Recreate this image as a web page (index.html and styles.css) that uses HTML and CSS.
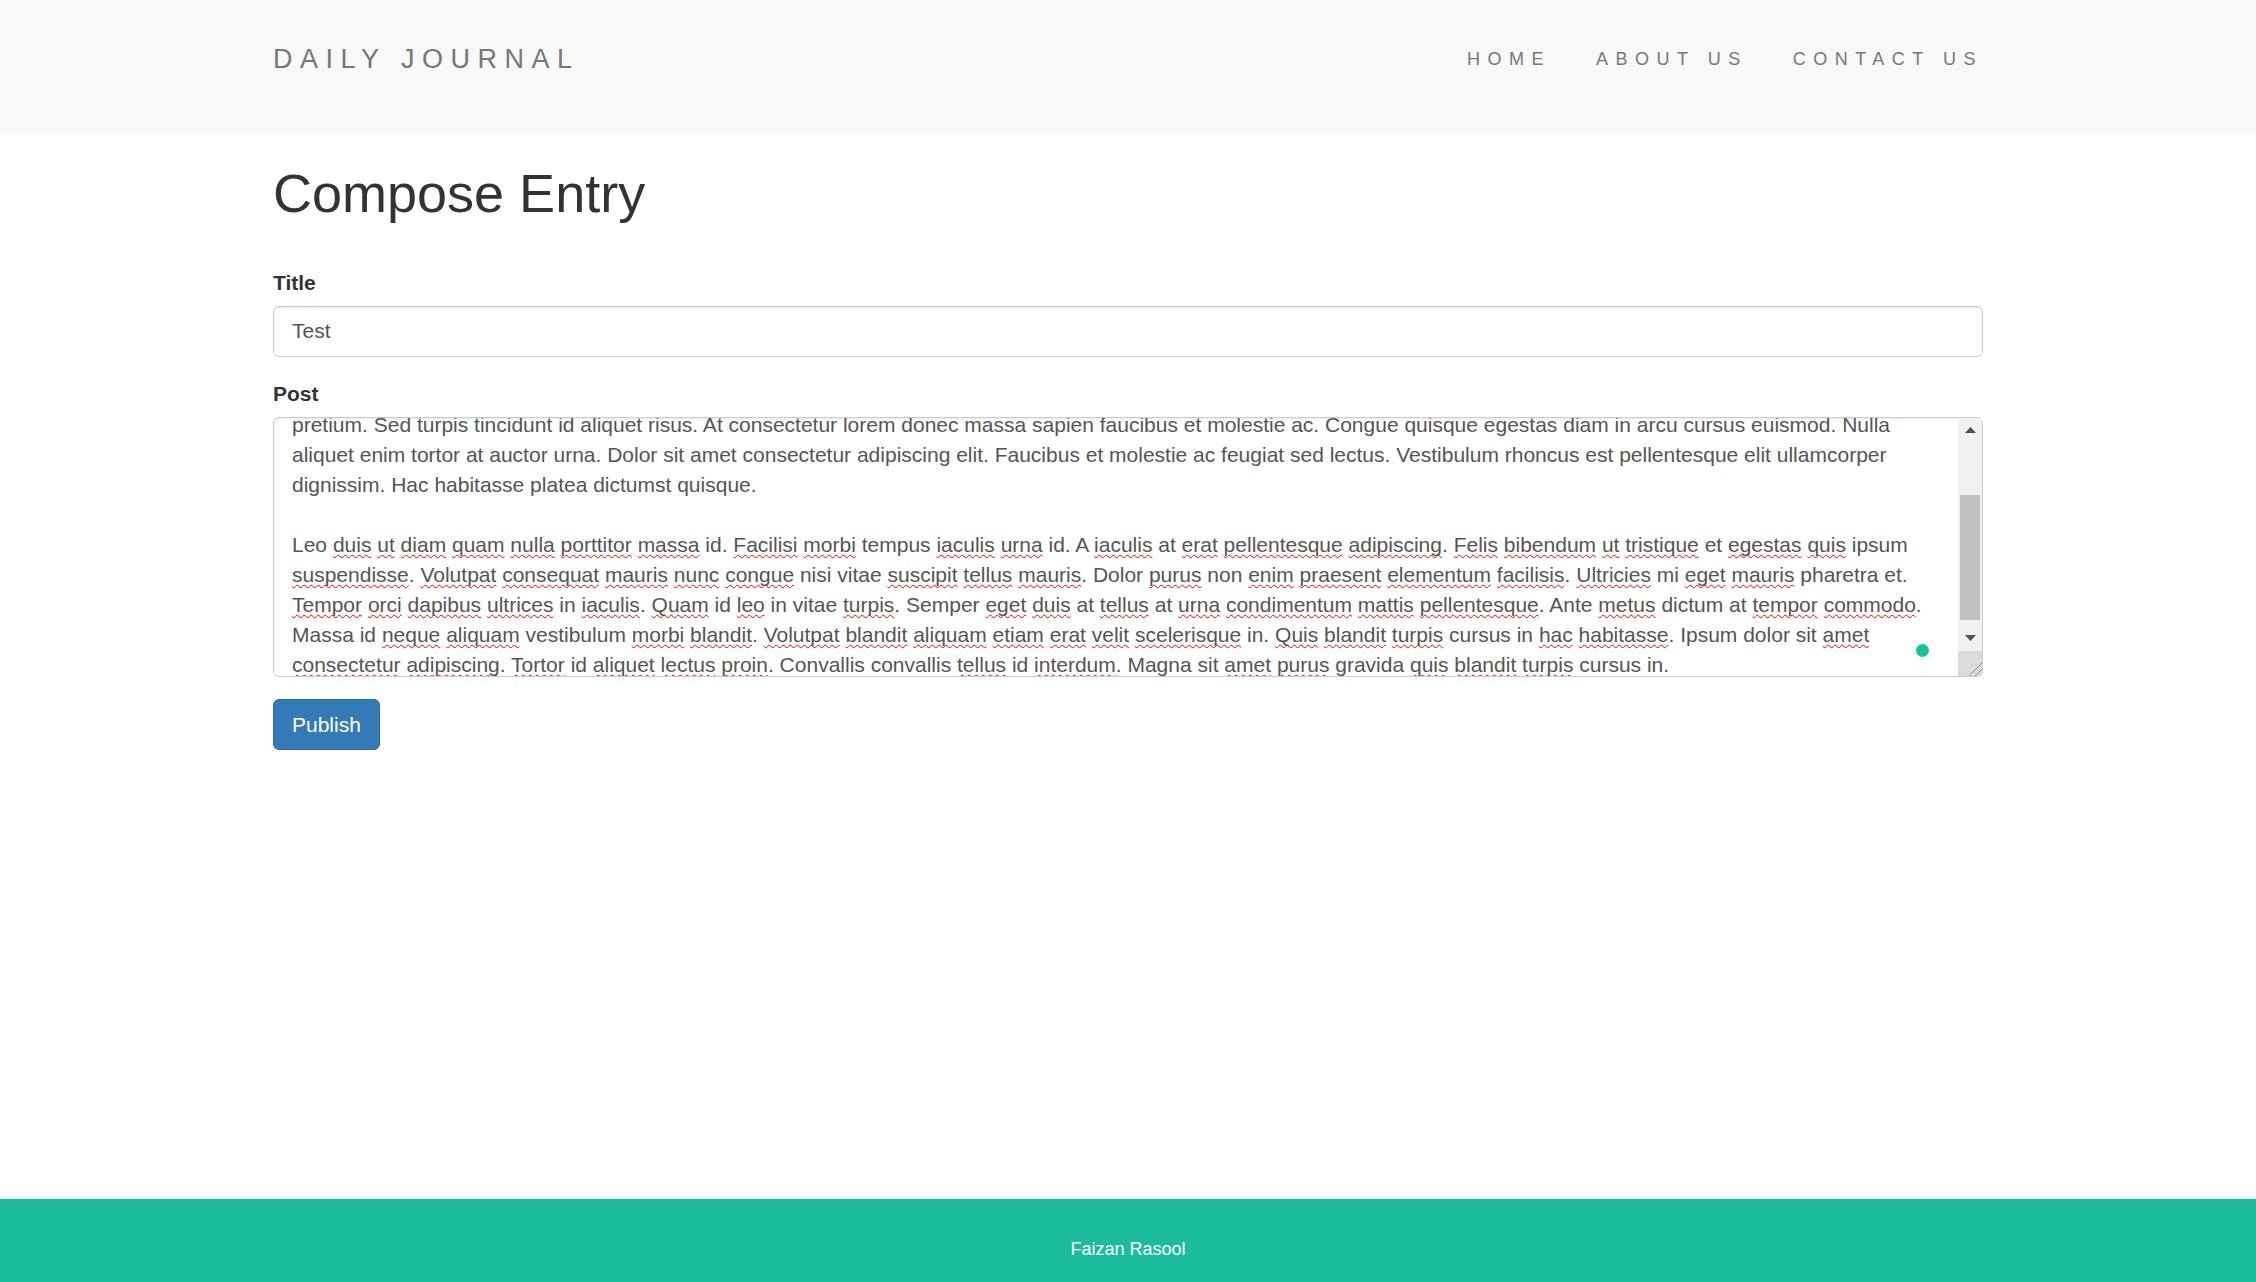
FILE: index.html
```html
<!DOCTYPE html>
<html lang="en">
<head>
<meta charset="utf-8">
<title>Daily Journal</title>
<link rel="stylesheet" href="styles.css">
</head>
<body>
<header class="navbar">
  <div class="container nav-inner">
    <a class="brand" href="#">DAILY JOURNAL</a>
    <ul class="nav-links">
      <li><a href="#">HOME</a></li>
      <li><a href="#">ABOUT US</a></li>
      <li><a href="#">CONTACT US</a></li>
    </ul>
  </div>
</header>

<main class="main">
  <div class="container">
    <h1 class="page-title">Compose Entry</h1>
    <form class="compose-form">
      <div class="form-group">
        <label class="field-label">Title</label>
        <input class="form-control" type="text" value="Test">
      </div>
      <div class="form-group">
        <label class="field-label">Post</label>
        <div class="post-box">
          <div class="post-text">
            <div class="post-lines">
              <div class="ln">pretium. Sed turpis tincidunt id aliquet risus. At consectetur lorem donec massa sapien faucibus et molestie ac. Congue quisque egestas diam in arcu cursus euismod. Nulla</div>
              <div class="ln">aliquet enim tortor at auctor urna. Dolor sit amet consectetur adipiscing elit. Faucibus et molestie ac feugiat sed lectus. Vestibulum rhoncus est pellentesque elit ullamcorper</div>
              <div class="ln">dignissim. Hac habitasse platea dictumst quisque.</div>
              <div class="ln">&nbsp;</div>
              <div class="ln">Leo <span class="m">duis</span> <span class="m">ut</span> <span class="m">diam</span> <span class="m">quam</span> <span class="m">nulla</span> <span class="m">porttitor</span> <span class="m">massa</span> id. <span class="m">Facilisi</span> <span class="m">morbi</span> tempus <span class="m">iaculis</span> <span class="m">urna</span> id. A <span class="m">iaculis</span> at <span class="m">erat</span> <span class="m">pellentesque</span> <span class="m">adipiscing</span>. <span class="m">Felis</span> <span class="m">bibendum</span> <span class="m">ut</span> <span class="m">tristique</span> et <span class="m">egestas</span> <span class="m">quis</span> ipsum</div>
              <div class="ln"><span class="m">suspendisse</span>. <span class="m">Volutpat</span> <span class="m">consequat</span> <span class="m">mauris</span> <span class="m">nunc</span> <span class="m">congue</span> nisi vitae <span class="m">suscipit</span> <span class="m">tellus</span> <span class="m">mauris</span>. Dolor <span class="m">purus</span> non <span class="m">enim</span> <span class="m">praesent</span> <span class="m">elementum</span> <span class="m">facilisis</span>. <span class="m">Ultricies</span> mi <span class="m">eget</span> <span class="m">mauris</span> pharetra et.</div>
              <div class="ln"><span class="m">Tempor</span> <span class="m">orci</span> <span class="m">dapibus</span> <span class="m">ultrices</span> in <span class="m">iaculis</span>. <span class="m">Quam</span> id <span class="m">leo</span> in vitae <span class="m">turpis</span>. Semper <span class="m">eget</span> <span class="m">duis</span> at <span class="m">tellus</span> at <span class="m">urna</span> <span class="m">condimentum</span> <span class="m">mattis</span> <span class="m">pellentesque</span>. Ante <span class="m">metus</span> dictum at <span class="m">tempor</span> <span class="m">commodo</span>.</div>
              <div class="ln">Massa id <span class="m">neque</span> <span class="m">aliquam</span> vestibulum <span class="m">morbi</span> <span class="m">blandit</span>. <span class="m">Volutpat</span> <span class="m">blandit</span> <span class="m">aliquam</span> <span class="m">etiam</span> <span class="m">erat</span> <span class="m">velit</span> <span class="m">scelerisque</span> in. <span class="m">Quis</span> <span class="m">blandit</span> <span class="m">turpis</span> cursus in <span class="m">hac</span> <span class="m">habitasse</span>. Ipsum dolor sit <span class="m">amet</span></div>
              <div class="ln"><span class="m">consectetur</span> <span class="m">adipiscing</span>. <span class="m">Tortor</span> id <span class="m">aliquet</span> <span class="m">lectus</span> <span class="m">proin</span>. Convallis convallis <span class="m">tellus</span> id <span class="m">interdum</span>. Magna sit <span class="m">amet</span> <span class="m">purus</span> gravida <span class="m">quis</span> <span class="m">blandit</span> <span class="m">turpis</span> cursus in.</div>
            </div>
          </div>
          <div class="scrollbar">
            <div class="sb-btn">
              <svg width="11" height="6" viewBox="0 0 11 6"><path d="M0 6 L5.5 0 L11 6 Z" fill="#505050"/></svg>
            </div>
            <div class="sb-track"><div class="sb-thumb"></div></div>
            <div class="sb-btn">
              <svg width="11" height="6" viewBox="0 0 11 6"><path d="M0 0 L11 0 L5.5 6 Z" fill="#505050"/></svg>
            </div>
            <div class="sb-corner">
              <svg width="24" height="25" viewBox="0 0 24 25"><path d="M11 25 L24 12 M17 25 L24 18" stroke="#8c8c8c" stroke-width="1" fill="none"/></svg>
            </div>
          </div>
          <span class="status-dot"></span>
        </div>
      </div>
      <button class="btn-primary" type="button">Publish</button>
    </form>
  </div>
</main>

<footer class="footer">
  <p class="footer-text">Faizan Rasool</p>
</footer>
</body>
</html>
```

FILE: styles.css
```css
* {
  box-sizing: border-box;
}

html, body {
  margin: 0;
  padding: 0;
}

body {
  min-height: 100vh;
  display: flex;
  flex-direction: column;
  font-family: "Liberation Sans", Arial, Helvetica, sans-serif;
  font-size: 21px;
  line-height: 30px;
  color: #333;
  background: #fff;
}

.container {
  width: 1710px;
  margin: 0 auto;
}

/* Navbar */
.navbar {
  background: #f8f8f8;
  height: 134px;
  flex: none;
}

.nav-inner {
  display: flex;
  justify-content: space-between;
  align-items: flex-start;
  padding-top: 44px;
}

.brand {
  font-size: 27px;
  line-height: 30px;
  letter-spacing: 7.5px;
  color: #777;
  text-decoration: none;
}

.nav-links {
  display: flex;
  list-style: none;
  margin: 0 -22.5px 0 0;
  padding: 0;
}

.nav-links a {
  display: block;
  padding: 0 22.5px;
  font-size: 18px;
  line-height: 30px;
  letter-spacing: 7.5px;
  color: #777;
  text-decoration: none;
}

/* Main */
.main {
  flex: 1;
}

.page-title {
  margin: 30px 0 45px;
  font-size: 54px;
  line-height: 1.1;
  font-weight: 500;
  color: #333;
}

.compose-form {
  margin: 0;
}

.form-group {
  margin-bottom: 22.5px;
}

.field-label {
  display: block;
  font-weight: bold;
  font-size: 21px;
  line-height: 30px;
  margin-bottom: 7.5px;
  color: #333;
}

.form-control {
  display: block;
  width: 100%;
  height: 51px;
  padding: 9px 18px;
  font-family: "Liberation Sans", Arial, Helvetica, sans-serif;
  font-size: 21px;
  line-height: 30px;
  color: #555;
  background: #fff;
  border: 1px solid #ccc;
  border-radius: 6px;
  box-shadow: inset 0 1.5px 1.5px rgba(0, 0, 0, 0.075);
  outline: none;
}

/* Fake scrolled textarea */
.post-box {
  position: relative;
  display: flex;
  height: 260px;
  border: 1px solid #ccc;
  border-radius: 6px;
  background: #fff;
  overflow: hidden;
  box-shadow: inset 0 1.5px 1.5px rgba(0, 0, 0, 0.075);
}

.post-text {
  flex: 1;
  min-width: 0;
  display: flex;
  flex-direction: column;
  justify-content: flex-end;
  overflow: hidden;
  padding: 0 18px;
  color: #555;
  font-size: 21px;
  line-height: 30px;
}

.post-lines {
  flex: none;
  margin-bottom: -4px;
}

.ln {
  white-space: nowrap;
}

.m {
  text-decoration: underline wavy #ff0000;
  text-decoration-thickness: 1px;
  text-underline-offset: 2px;
  text-decoration-skip-ink: none;
}

.scrollbar {
  flex: none;
  width: 24px;
  display: flex;
  flex-direction: column;
  background: #f1f1f1;
}

.sb-btn {
  height: 25px;
  display: flex;
  align-items: center;
  justify-content: center;
}

.sb-btn svg {
  display: block;
}

.sb-track {
  flex: 1;
  display: flex;
  flex-direction: column;
  padding: 52px 2px 6px;
}

.sb-thumb {
  flex: 1;
  background: #c1c1c1;
}

.sb-corner {
  height: 25px;
  background: #dcdcdc;
}

.sb-corner svg {
  display: block;
}

.status-dot {
  position: absolute;
  right: 53px;
  bottom: 19px;
  width: 13px;
  height: 13px;
  border-radius: 50%;
  background: #15c39a;
}

.btn-primary {
  display: inline-block;
  height: 51px;
  padding: 0 18px;
  font-family: "Liberation Sans", Arial, Helvetica, sans-serif;
  font-size: 21px;
  line-height: 30px;
  color: #fff;
  background: #337ab7;
  border: 1px solid #2e6da4;
  border-radius: 6px;
  cursor: pointer;
}

/* Footer */
.footer {
  flex: none;
  height: 83px;
  background: #1abc9c;
  padding-top: 35px;
}

.footer-text {
  margin: 0;
  text-align: center;
  font-size: 18px;
  line-height: 30px;
  color: #fff;
}
```
